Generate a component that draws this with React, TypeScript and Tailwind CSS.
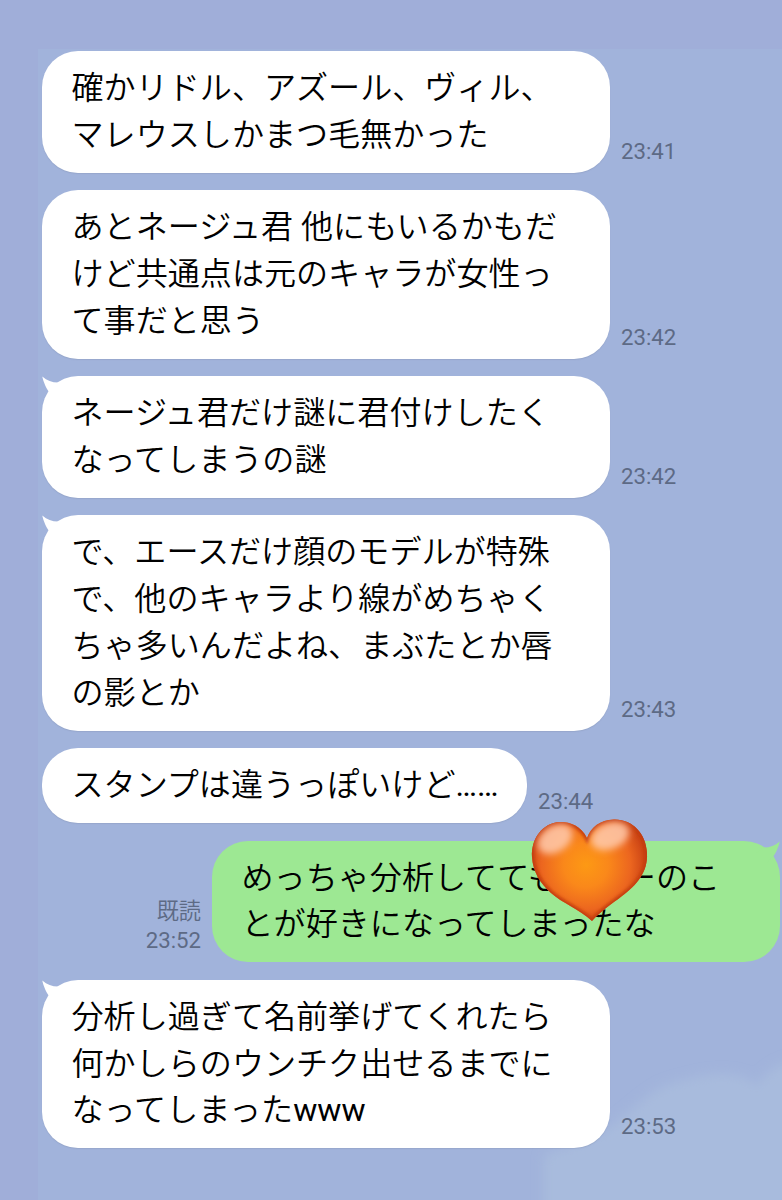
import { clsx } from 'clsx';

interface Message {
  lines: string[];
  latin?: string;
  time: string;
  mine?: boolean;
  tail?: boolean;
  short?: boolean;
}

const messages: Message[] = [
  { lines: ['確かリドル、アズール、ヴィル、', 'マレウスしかまつ毛無かった'], time: '23:41' },
  { lines: ['あとネージュ君 他にもいるかもだ', 'けど共通点は元のキャラが女性っ', 'て事だと思う'], time: '23:42' },
  { lines: ['ネージュ君だけ謎に君付けしたく', 'なってしまうの謎'], time: '23:42', tail: true },
  { lines: ['で、エースだけ顔のモデルが特殊', 'で、他のキャラより線がめちゃく', 'ちゃ多いんだよね、まぶたとか唇', 'の影とか'], time: '23:43', tail: true },
  { lines: ['スタンプは違うっぽいけど'], latin: '……', time: '23:44', short: true },
  { lines: ['めっちゃ分析してても\u3000\u3000ーのこ', 'とが好きになってしまったな'], time: '23:52', mine: true, tail: true },
  { lines: ['分析し過ぎて名前挙げてくれたら', '何かしらのウンチク出せるまでに', 'なってしまった'], latin: 'www', time: '23:53', tail: true },
];

const Heart = () => (
  <svg className="absolute left-[319px] top-[-22px] h-[104px] w-[118px]" viewBox="0 0 118 104">
    <defs>
      <radialGradient id="heartBody" gradientUnits="userSpaceOnUse" cx="55" cy="46" r="74">
        <stop offset="0" stopColor="#fd9914" />
        <stop offset="0.3" stopColor="#fa881a" />
        <stop offset="0.6" stopColor="#ec661f" />
        <stop offset="0.8" stopColor="#cc4515" />
        <stop offset="1" stopColor="#982a0b" />
      </radialGradient>
      <clipPath id="heartClip">
        <path d="M56 19C50 7 40 3 29 3C11 4 0 20 1 38C2 53 9 64 20 74C31 84 48 90 61 102C72 90 81 85 91 77C106 66 117 53 116 34C115 14 101 0 83 0.5C69 1 60 8 56 19Z" />
      </clipPath>
      <filter id="soft" x="-40%" y="-40%" width="180%" height="180%">
        <feGaussianBlur stdDeviation="3.5" />
      </filter>
      <filter id="rim" x="-20%" y="-20%" width="140%" height="140%">
        <feGaussianBlur stdDeviation="1.6" />
      </filter>
    </defs>
    <g clipPath="url(#heartClip)">
      <rect width="118" height="104" fill="url(#heartBody)" />
      <path
        d="M56 19C50 7 40 3 29 3C11 4 0 20 1 38C2 53 9 64 20 74C31 84 48 90 61 102C72 90 81 85 91 77C106 66 117 53 116 34C115 14 101 0 83 0.5C69 1 60 8 56 19Z"
        fill="none"
        stroke="#c43c10"
        strokeWidth="5"
        filter="url(#rim)"
      />
      <g filter="url(#soft)">
        <ellipse cx="24" cy="20" rx="19" ry="13" fill="#ffcbad" fillOpacity="0.85" transform="rotate(-32 24 20)" />
        <ellipse cx="79" cy="17" rx="20" ry="13" fill="#ffcbad" fillOpacity="0.85" transform="rotate(-22 79 17)" />
      </g>
    </g>
  </svg>
);

const Tail = ({ mine }: { mine?: boolean }) => (
  <svg
    className={clsx('absolute top-0 h-[22px] w-[24px]', mine ? 'right-0 -scale-x-100 text-[#9de893]' : 'left-0 text-white')}
    viewBox="0 0 24 22"
  >
    <path d="M0.3 0.5C5 4.5 10 6.5 16 6.5L24 12L14 22L7 16C4.5 12.5 1.5 6.5 0.3 0.5Z" fill="currentColor" />
  </svg>
);

const Bubble = ({ lines, latin, mine, tail, short }: Message) => (
  <div
    className={clsx(
      'relative shrink-0 rounded-[36px] py-[14px] pl-[29.5px] text-[32.1px] leading-[46.8px] font-[350] text-black',
      short ? 'w-[485px]' : 'w-[568px]',
      mine ? 'bg-[#9de893]' : 'bg-white',
      !mine && 'shadow-[0_1px_1px_rgba(120,130,160,0.25)]'
    )}
  >
    {tail && <Tail mine={mine} />}
    {lines.map((line, i) => (
      <p key={line} className="whitespace-pre">
        {line}
        {latin && i === lines.length - 1 && <span className="font-normal">{latin}</span>}
      </p>
    ))}
    {mine && <Heart />}
  </div>
);

const App = () => (
  <div
    lang="ja"
    className="relative h-[1200px] w-[782px] overflow-hidden bg-[#a0aed9] pt-[49px] pl-[38px] font-[Roboto,'Noto_Sans_CJK_JP',sans-serif]"
  >
    <div className="relative h-full overflow-hidden bg-[#a1b3db]">
      <svg className="absolute right-0 bottom-0 h-[180px] w-[280px]" viewBox="0 0 280 180">
        <defs>
          <filter id="haze" x="-20%" y="-20%" width="140%" height="140%">
            <feGaussianBlur stdDeviation="6" />
          </filter>
        </defs>
        <path
          d="M42 200V135C70 125 95 118 110 105C135 88 150 66 180 61C205 54 235 48 256 66C262 54 272 44 300 38V200Z"
          fill="#a8bbdd"
          filter="url(#haze)"
        />
      </svg>
      <div className="relative flex flex-col gap-[17.6px] pt-[2.1px] pr-[2px] pl-[4px]">
        {messages.map((message, i) => (
          <div key={i} className={clsx('flex items-end gap-[11px]', message.mine && 'flex-row-reverse')}>
            <Bubble {...message} />
            <div className="pb-[7px] text-right text-[22.2px] leading-[29px] text-[#5d6a85]">
              {message.mine && <p className="font-[350]">既読</p>}
              <p>{message.time}</p>
            </div>
          </div>
        ))}
      </div>
    </div>
  </div>
);

export default App;
